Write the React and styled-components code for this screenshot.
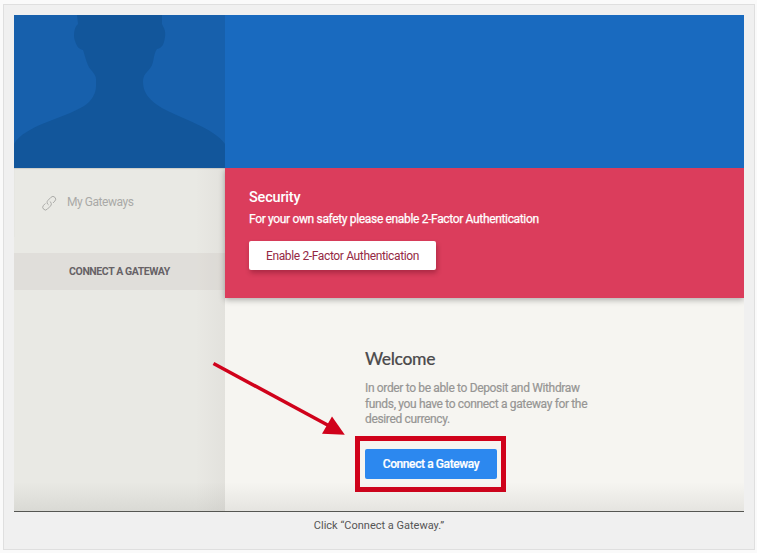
import React from "react";
import styled, { createGlobalStyle } from "styled-components";

const GlobalStyle = createGlobalStyle`
  * { box-sizing: border-box; }
  body { margin: 0; background: #fafafa; font-family: Roboto, "Liberation Sans", sans-serif; }
  h1, h2, p { margin: 0; }
  button { font-family: inherit; border: 0; padding: 0; }
`;

const Page = styled.main`
  width: 757px;
  height: 553px;
  padding: 4px 2px 3px 3px;
  overflow: hidden;
`;

const Figure = styled.figure`
  margin: 0;
  width: 752px;
  height: 546px;
  padding: 10px;
  border: 1px solid #dfdfdf;
  background: #f0f0f0;
`;

const Screen = styled.div`
  position: relative;
  display: grid;
  grid-template-columns: 211px 519px;
  width: 730px;
  height: 497px;
  overflow: hidden;
  border-bottom: 1px solid #555652;
`;

const Sidebar = styled.aside`
  display: flex;
  flex-direction: column;
  background: linear-gradient(to right, rgba(0,0,0,0) 86%, rgba(80,60,60,0.045)), #e9e9e4;
`;

const Avatar = styled.svg`
  display: block;
  position: relative;
  z-index: 1;
  width: 211px;
  height: 153px;
  flex: none;
  background: #1760ac;
`;

const NavItem = styled.div`
  display: flex;
  align-items: center;
  height: 69px;
  margin-bottom: 16px;
  padding-left: 27px;
  gap: 9px;
  color: #a9a9a7;
  font-size: 12px;
  box-shadow: inset 0 1px 1px rgba(0,0,0,0.12);
`;

const NavLabel = styled.span`
  margin-top: -1px;
  letter-spacing: -0.45px;
`;

const NavAction = styled.button`
  height: 37px;
  background: rgba(200, 190, 187, 0.25);
  color: #676266;
  font-size: 10.5px;
  font-weight: 700;
  letter-spacing: -0.42px;
`;

const Content = styled.section`
  display: flex;
  flex-direction: column;
  background: #f6f5f1;
`;

const Header = styled.header`
  position: relative;
  z-index: 1;
  height: 153px;
  background: #196abf;
`;

const Banner = styled.section`
  height: 130px;
  padding: 20px 24px;
  background: #db3d5c;
  color: #fff;
  box-shadow: 0 2px 6px rgba(0,0,0,0.3);
`;

const BannerTitle = styled.h2`
  font-size: 14.5px;
  line-height: 19px;
  font-weight: 500;
  letter-spacing: -0.2px;
`;

const BannerText = styled.p`
  margin-top: 4px;
  font-size: 12px;
  line-height: 17px;
  letter-spacing: -0.34px;
  -webkit-text-stroke: 0.25px currentColor;
`;

const SecurityButton = styled.button`
  display: block;
  width: 187px;
  height: 29px;
  margin-top: 13px;
  border-radius: 2px;
  background: #fff;
  color: #942944;
  font-size: 12px;
  letter-spacing: -0.36px;
  box-shadow: 1px 3px 5px rgba(70,0,20,0.32);
`;

const Welcome = styled.section`
  padding: 49px 0 0 140px;
`;

const WelcomeTitle = styled.h1`
  color: #4c4b4d;
  font: 500 17.5px/23px Lato, sans-serif;
  letter-spacing: -0.35px;
  -webkit-text-stroke: 0.15px currentColor;
`;

const WelcomeText = styled.p`
  width: 240px;
  margin-top: 11px;
  color: #969594;
  font-size: 12px;
  line-height: 15.6px;
  letter-spacing: -0.35px;
  -webkit-text-stroke: 0.2px currentColor;
`;

const Highlight = styled.div`
  width: 151px;
  height: 56px;
  margin: 8px 0 0 -10px;
  padding: 8px 5px;
  border: 5px solid #d0021b;
`;

const GatewayButton = styled.button`
  display: block;
  width: 132px;
  height: 30px;
  border-radius: 2px;
  background: #2c88ef;
  color: #fff;
  font-size: 12px;
  font-weight: 500;
  letter-spacing: -0.4px;
  -webkit-text-stroke: 0.2px currentColor;
`;

const Fade = styled.div`
  position: absolute;
  left: 0;
  right: 0;
  bottom: 0;
  height: 29px;
  background: linear-gradient(to bottom, rgba(60,60,55,0), rgba(60,60,55,0.09));
  pointer-events: none;
`;

const Pointer = styled.svg`
  position: absolute;
  left: 196px;
  top: 342px;
  width: 138px;
  height: 80px;
`;

const Caption = styled.figcaption`
  height: 26px;
  color: #555;
  font-size: 11px;
  line-height: 28px;
  text-align: center;
`;

function LinkIcon() {
  return (
    <svg width="17" height="17" viewBox="0 0 17 17" fill="none" stroke="#a8a8a5" strokeWidth="0.9">
      <g transform="translate(8.2 9.2) rotate(-45)">
        <path d="M-1.6 .8A2.8 2.8 0 0 1 1.2-2.9H5.5A2.7 2.7 0 0 1 5.5 2.5H2.8" />
        <path d="M1.6-.8A2.8 2.8 0 0 1-1.2 2.9H-5.5A2.7 2.7 0 0 1-5.5-2.5H-2.8" />
      </g>
    </svg>
  );
}

export default function App() {
  return (
    <Page>
      <GlobalStyle />
      <Figure>
        <Screen>
          <Sidebar>
            <Avatar viewBox="0 0 211 153">
              <path fill="#12569b" d="M63 0L64 9C60 12 59 21 61 26C63 32 65 34 69 35C72 44 73 51 78 56C80 59 82 61 82 64V71C82 78 78 86 70 91C49 104 11 110 0 129V153H211V129C200 113 168 104 148 93C136 86 129 78 129 67C129 59 133 58 137 52C140 48 139 40 143 34C149 33 150 28 151 22C152 16 150 13 148 9V0Z" />
            </Avatar>
            <NavItem><LinkIcon /><NavLabel>My Gateways</NavLabel></NavItem>
            <NavAction>CONNECT A GATEWAY</NavAction>
          </Sidebar>
          <Content>
            <Header />
            <Banner>
              <BannerTitle>Security</BannerTitle>
              <BannerText>For your own safety please enable 2-Factor Authentication</BannerText>
              <SecurityButton>Enable 2-Factor Authentication</SecurityButton>
            </Banner>
            <Welcome>
              <WelcomeTitle>Welcome</WelcomeTitle>
              <WelcomeText>
                In order to be able to Deposit and Withdraw<br />
                funds, you have to connect a gateway for the<br />
                desired currency.
              </WelcomeText>
              <Highlight><GatewayButton>Connect a Gateway</GatewayButton></Highlight>
            </Welcome>
          </Content>
          <Fade />
          <Pointer viewBox="0 0 138 80">
            <path d="M3.5 6.5L118 68.2" stroke="#d0021b" strokeWidth="3.5" />
            <path d="M122 59.5L134.8 77.7L112 76.7Z" fill="#d0021b" />
          </Pointer>
        </Screen>
        <Caption>Click “Connect a Gateway.”</Caption>
      </Figure>
    </Page>
  );
}
